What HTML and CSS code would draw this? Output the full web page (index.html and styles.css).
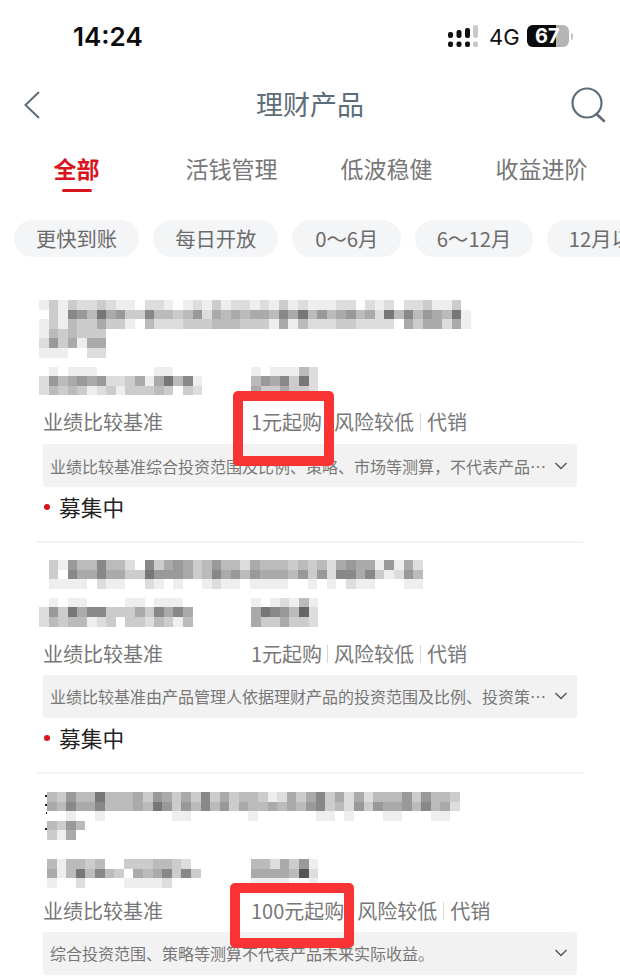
FILE: index.html
```html
<!DOCTYPE html>
<html lang="zh-CN">
<head>
<meta charset="utf-8">
<title>理财产品</title>
<link rel="stylesheet" href="styles.css">
</head>
<body>
<div class="status">
  <span class="time">14:24</span>
  <div class="status-right">
    <svg class="signal" width="30" height="22" viewBox="0 0 30 22">
      <g fill="#111">
        <rect x="0" y="7" width="5" height="6" rx="2"/><rect x="0" y="16.5" width="5" height="5.5" rx="2"/>
        <rect x="8.5" y="5" width="5" height="8" rx="2"/><rect x="8.5" y="16.5" width="5" height="5.5" rx="2"/>
        <rect x="17" y="3" width="5" height="10" rx="2"/><rect x="17" y="16.5" width="5" height="5.5" rx="2"/>
      </g>
      <g fill="#c9c9c9">
        <rect x="25" y="0" width="5" height="13" rx="2"/><rect x="25" y="16.5" width="5" height="5.5" rx="2"/>
      </g>
    </svg>
    <span class="net">4G</span>
    <div class="battery"><div class="battery-fill"></div><span class="battery-num">67</span></div>
    <span class="battery-nub"></span>
  </div>
</div>

<header class="nav">
  <svg class="back" width="20" height="30" viewBox="0 0 20 30"><path d="M17 2 3.5 15 17 28" fill="none" stroke="#5d6d7a" stroke-width="2"/></svg>
  <h1 class="title">理财产品</h1>
  <svg class="search" width="38" height="36" viewBox="0 0 38 36"><circle cx="17" cy="16" r="14.5" fill="none" stroke="#5d6d7a" stroke-width="2.2"/><path d="M26.5 27 34 34" fill="none" stroke="#5d6d7a" stroke-width="2.6" stroke-linecap="round"/></svg>
</header>

<nav class="tabs">
  <div class="tab tab-active">全部<i class="tab-bar"></i></div>
  <div class="tab">活钱管理</div>
  <div class="tab">低波稳健</div>
  <div class="tab">收益进阶</div>
</nav>

<div class="chips">
  <span class="chip">更快到账</span>
  <span class="chip">每日开放</span>
  <span class="chip chip-short">0～6月</span>
  <span class="chip chip-mid">6～12月</span>
  <span class="chip">12月以上</span>
</div>

<section class="card card-first">
  <div class="mosaic" data-rows="ececddcdeefddefedeceddedecedeeeddfdedfddceecf|fce89b7a9cc8bbcb9dababaab8a7b9ba9bad7b8b9ab7e|ecebccaccefbdddcccbbbccceaebdddccddddfacaadae|ebcbccc|d9caeaaf|eeeffddf"></div>
  <div class="sub">
    <div class="mosaic" data-rows="fefeeeffffffeefff|d9ba9a9ddcaea7b8e|dbcbcedcecccbcfcd"></div>
    <div class="mosaic" data-rows="efeeebd|b9a8c7d|accaccd"></div>
  </div>
  <div class="meta">
    <span>业绩比较基准</span>
    <div class="meta-right"><span>1元起购</span><i class="sep"></i><span>风险较低</span><i class="sep"></i><span>代销</span></div>
  </div>
  <div class="note"><span>业绩比较基准综合投资范围及比例、策略、市场等测算，不代表产品…</span><svg class="caret" width="14" height="8" viewBox="0 0 14 8"><path d="M1.5 1 7 6.5 12.5 1" fill="none" stroke="#555" stroke-width="1.4"/></svg></div>
  <div class="state"><i class="dot"></i>募集中</div>
</section>

<section class="card card-second">
  <div class="mosaic" data-rows="fce9bb8bbdf8ca9acb9bbdabbbcbcbda9aae9ead|fcf8aa8aacc7999acb8a9b9aaab9c9d88a8ced9b|feeeefdeeffdefeffedeefeeeeffefefdeefffee"></div>
  <div class="sub">
    <div class="mosaic" data-rows="fefeeffffeefeeef|d9c7a88cccac8a8a|dbcbbedcfccdbceb"></div>
    <div class="mosaic" data-rows="efedebe|a789b6d|accaccd"></div>
  </div>
  <div class="meta">
    <span>业绩比较基准</span>
    <div class="meta-right"><span>1元起购</span><i class="sep"></i><span>风险较低</span><i class="sep"></i><span>代销</span></div>
  </div>
  <div class="note"><span>业绩比较基准由产品管理人依据理财产品的投资范围及比例、投资策…</span><svg class="caret" width="14" height="8" viewBox="0 0 14 8"><path d="M1.5 1 7 6.5 12.5 1" fill="none" stroke="#555" stroke-width="1.4"/></svg></div>
  <div class="state"><i class="dot"></i>募集中</div>
</section>

<section class="card card-third">
  <div class="title-wrap">
    <svg class="specks" width="4" height="42" viewBox="0 0 4 42"><g fill="#222"><rect x="1" y="3" width="2" height="2"/><rect x="1" y="12" width="2" height="2"/><rect x="2" y="20" width="1.5" height="2"/><rect x="1" y="36" width="2" height="2"/></g></svg>
    <div class="mosaic" data-rows="bc9bb7bbbac9acac8cacbbcedaca8cadadbbb9c9bbc|ab8aa8bbbab79c9b8b9cabbabab98cbd9c9aa9b8bad|ffeffefffffffeeffffffeffffffeefefffeefffeeff|bc9b|cea"></div>
  </div>
  <div class="sub sub-third">
    <div class="mosaic" data-rows="bebbcbffcccbbcdf|aeb7b8bcfaba8c8c|effdffffeeeedfff"></div>
    <div class="mosaic" data-rows="bbdac9e|aaaab5d|eeeeffe"></div>
  </div>
  <div class="meta">
    <span>业绩比较基准</span>
    <div class="meta-right"><span>100元起购</span><i class="sep"></i><span>风险较低</span><i class="sep"></i><span>代销</span></div>
  </div>
  <div class="note"><span>综合投资范围、策略等测算不代表产品未来实际收益。</span><svg class="caret" width="14" height="8" viewBox="0 0 14 8"><path d="M1.5 1 7 6.5 12.5 1" fill="none" stroke="#555" stroke-width="1.4"/></svg></div>
</section>

<div class="mark mark-one"></div>
<div class="mark mark-two"></div>
<script src="mosaic.js"></script>
</body>
</html>
```
FILE: styles.css
```css
* { box-sizing: border-box; }
html, body { margin: 0; padding: 0; }
body {
  position: relative;
  width: 620px;
  height: 979px;
  overflow: hidden;
  background: #fff;
  font-family: "Noto Sans CJK SC", "Liberation Sans", sans-serif;
  color: #777;
}
.status {
  height: 82px;
  display: flex;
  justify-content: space-between;
  padding: 19px 47px 0 73px;
}
.time {
  font-family: Inter, Roboto, sans-serif;
  font-weight: 600;
  font-size: 26px;
  line-height: 36px;
  color: #0b0b0b;
}
.status-right { display: flex; align-items: center; height: 36px; }
.signal { margin-top: -2px; }
.net {
  margin-left: 11px;
  font-family: Inter, Roboto, sans-serif;
  font-size: 22px;
  color: #111;
  width: 38px;
}
.battery {
  position: relative;
  width: 42px;
  height: 22px;
  margin-top: -2px;
  border-radius: 6px;
  background: #b5b5b5;
  overflow: hidden;
}
.battery-fill { width: 29px; height: 100%; background: #0b0b0b; }
.battery-num {
  position: absolute;
  left: 8px;
  top: -3px;
  font-family: Inter, Roboto, sans-serif;
  font-weight: 700;
  font-size: 20px;
  line-height: 28px;
  color: #fff;
}
.battery-nub { width: 2px; height: 7px; margin: -2px 0 0 2px; background: #c4c4c4; border-radius: 0 2px 2px 0; }
.nav {
  height: 46px;
  display: grid;
  grid-template-columns: 1fr auto 1fr;
  align-items: center;
  padding: 0 12px;
}
.back { justify-self: start; margin-left: 10px; }
.search { justify-self: end; }
.title {
  margin: -2px 0 0;
  font-weight: 400;
  font-size: 27px;
  line-height: 46px;
  color: #5d6d7a;
}
.tabs {
  display: grid;
  grid-template-columns: repeat(4, 155px);
  height: 92px;
  margin-left: -1px;
  padding-top: 20px;
}
.tab {
  position: relative;
  text-align: center;
  font-size: 23px;
  line-height: 40px;
  height: 40px;
  color: #777;
}
.tab-active { color: #d8141c; font-weight: 700; }
.tab-bar {
  position: absolute;
  left: 63px;
  top: 41px;
  width: 30px;
  height: 3px;
  border-radius: 2px;
  background: #d8141c;
}
.chips {
  display: flex;
  gap: 14px;
  padding-left: 14px;
  height: 80px;
  white-space: nowrap;
}
.chip {
  flex: none;
  height: 37px;
  padding: 0 22px;
  border-radius: 19px;
  background: #f4f5f7;
  font-size: 20.3px;
  line-height: 37px;
  color: #6b6b6b;
}
.chip-short { padding: 0 23px; }
.chip-mid { padding: 0 21.5px; }
.card {
  margin: 0 37px;
  border-bottom: 2px solid #f3f3f3;
}
.card-first { height: 243px; }
.card-second { height: 214px; margin-top: 17px; }
.card-third { margin-top: 18px; border-bottom: 0; }
.card > .mosaic { margin-left: 2px; }
.mosaic { filter: blur(0.7px); }
.mrow { display: flex; height: 9.6px; }
.mcell { width: 9.6px; flex: none; }
.sub {
  display: grid;
  grid-template-columns: 212px auto;
  justify-content: start;
  margin: 9px 0 0 2px;
}
.sub-third { margin-top: 19px; }
.sub-third > .mosaic:first-child { margin-left: 8px; }
.title-wrap { position: relative; margin-left: 10px; }
.specks { position: absolute; left: -3px; top: 0; }
.meta {
  display: grid;
  grid-template-columns: 208px auto;
  justify-content: start;
  margin: 13px 0 0 6px;
  height: 28px;
  font-size: 20px;
  line-height: 28px;
  color: #777;
}
.card-third .meta { margin-top: 9px; }
.meta-right { display: flex; align-items: center; }
.sep { width: 1px; height: 18px; margin: 0 6px; background: #d6d6d6; }
.sep:nth-child(2) { margin-left: 5px; }
.card-third .sep:nth-child(2) { margin: 0 6px; }
.note {
  display: flex;
  align-items: center;
  justify-content: space-between;
  width: 534px;
  height: 43px;
  margin: 8px 0 0 6px;
  padding: 0 9px 0 7px;
  border-radius: 3px;
  background: #f2f2f2;
  font-size: 16px;
  color: #777;
  white-space: nowrap;
}
.card-second .note, .card-third .note { margin-top: 7px; }
.state {
  display: flex;
  align-items: center;
  height: 28px;
  margin: 6px 0 0 6px;
  font-size: 21.7px;
  line-height: 28px;
  color: #222;
}
.dot {
  width: 6px;
  height: 6px;
  margin: 0 9px 0 1px;
  border-radius: 50%;
  background: #d8141c;
}
.mark {
  position: absolute;
  border: 10px solid #f73333;
  border-radius: 5px;
}
.mark-one { left: 233px; top: 391px; width: 101px; height: 75px; }
.mark-two { left: 230px; top: 883px; width: 124px; height: 65px; }
```
FILE: mosaic.js
```js
document.querySelectorAll('.mosaic').forEach(function (box) {
  box.dataset.rows.split('|').forEach(function (row) {
    var line = document.createElement('div');
    line.className = 'mrow';
    row.split('').forEach(function (ch) {
      var cell = document.createElement('span');
      var v = parseInt(ch, 16) * 17;
      cell.className = 'mcell';
      cell.style.background = 'rgb(' + v + ',' + v + ',' + v + ')';
      line.appendChild(cell);
    });
    box.appendChild(line);
  });
});
```
